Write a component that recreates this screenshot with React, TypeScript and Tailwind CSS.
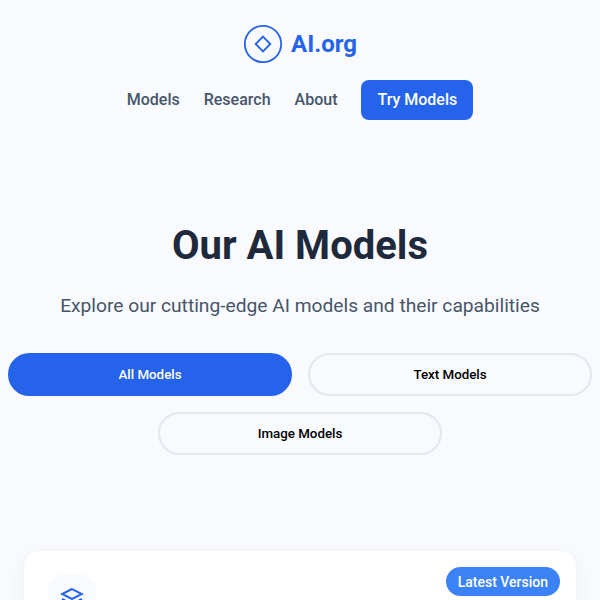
// App.tsx
const filters = [
  { label: "All Models", active: true },
  { label: "Text Models", active: false },
  { label: "Image Models", active: false },
];

export default function App() {
  return (
    <div className="h-screen overflow-hidden bg-[#f8fafd] font-['Roboto',sans-serif]">
      <header className="flex flex-col items-center gap-4 pt-6">
        <a className="flex items-center gap-2 text-2xl font-bold text-[#2563eb]">
          <svg width="40" height="40" viewBox="0 0 24 24" fill="none" stroke="currentColor" strokeWidth="1.1">
            <circle cx="12" cy="12" r="10.9" />
            <path d="M12 7.6 16.4 12 12 16.4 7.6 12Z" />
          </svg>
          <span>AI.org</span>
        </a>
        <nav className="flex items-center gap-6 font-medium text-[#475569]">
          <a>Models</a>
          <a>Research</a>
          <a>About</a>
          <a className="rounded-lg bg-[#2563eb] px-4 py-2 text-white">Try Models</a>
        </nav>
      </header>

      <section className="px-2 pt-[101px]">
        <h1 className="text-center text-[40px] leading-[50px] font-bold text-[#1e293b]">Our AI Models</h1>
        <p className="mt-[17px] text-center text-[19.2px] leading-[36px] text-[#475569]">
          Explore our cutting-edge AI models and their capabilities
        </p>
        <div className="mt-[29px] flex flex-wrap justify-center gap-4">
          {filters.map((f) => (
            <button
              key={f.label}
              className={
                f.active
                  ? "h-[43px] w-[284px] rounded-full border-2 border-[#2563eb] bg-[#2563eb] text-[13.33px] font-medium text-white"
                  : "h-[43px] w-[284px] rounded-full border-2 border-[#e2e8f0] text-[13.33px] font-medium text-black"
              }
            >
              {f.label}
            </button>
          ))}
        </div>
      </section>

      <section className="px-6 pt-24">
        <div className="relative rounded-2xl bg-white p-6 shadow-[0_4px_20px_rgba(0,0,0,0.05)]">
          <span className="absolute top-4 right-4 rounded-full bg-[#3b82f6] px-3 py-[4.5px] text-sm font-medium text-white">
            Latest Version
          </span>
          <div className="flex h-12 w-12 items-center justify-center rounded-xl bg-[#f8fafd] text-[#2563eb]">
            <svg width="24" height="24" viewBox="0 0 24 24" fill="none" stroke="currentColor" strokeWidth="2">
              <path d="M12 2 2 7l10 5 10-5-10-5Z" />
              <path d="m2 12 10 5 10-5" />
              <path d="m2 17 10 5 10-5" />
            </svg>
          </div>
          <div className="h-40" />
        </div>
      </section>
    </div>
  );
}
